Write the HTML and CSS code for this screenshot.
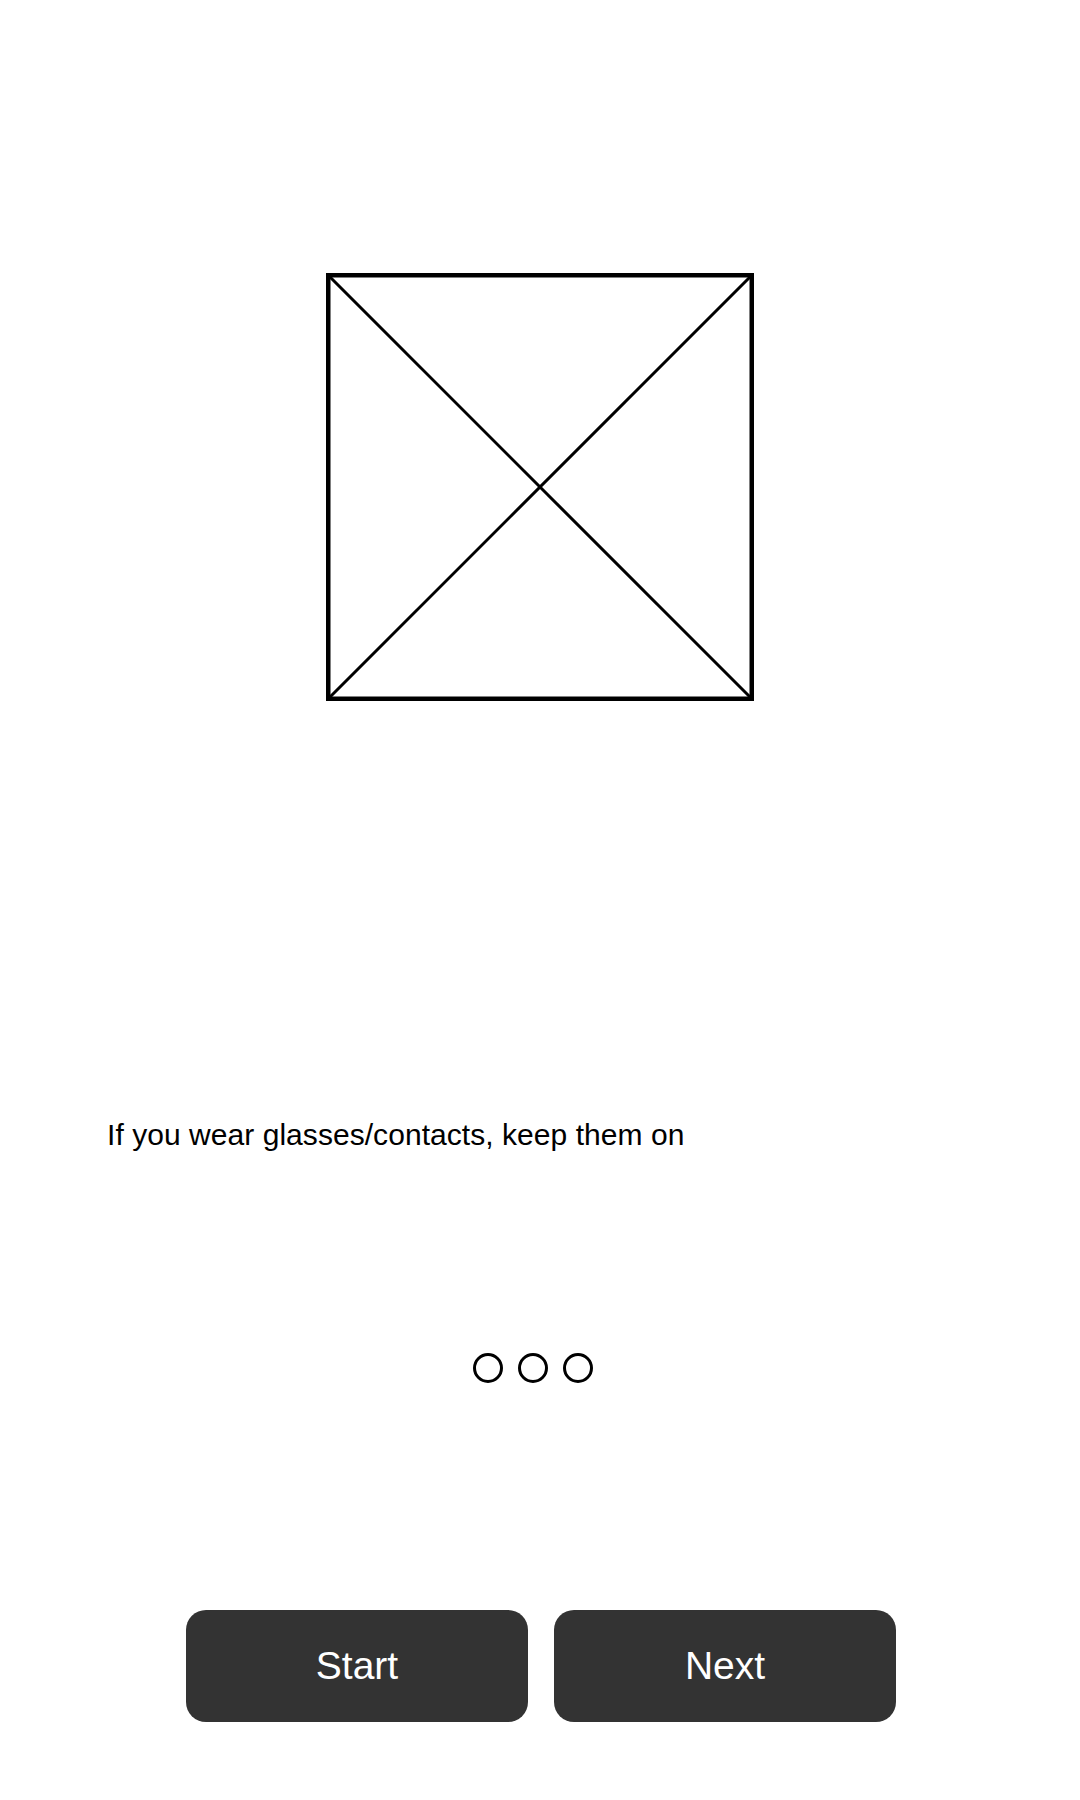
FILE: index.html
```html
<!DOCTYPE html>
<html lang="en">
<head>
<meta charset="utf-8">
<title>Instructions</title>
<link rel="stylesheet" href="styles.css">
</head>
<body>
<main class="screen">
  <div class="figure">
    <svg class="placeholder" viewBox="0 0 428 428" width="428" height="428">
      <rect x="2.25" y="2.25" width="423.5" height="423.5" fill="none" stroke="#000" stroke-width="4.5"/>
      <line x1="2" y1="2" x2="426" y2="426" stroke="#000" stroke-width="3"/>
      <line x1="426" y1="2" x2="2" y2="426" stroke="#000" stroke-width="3"/>
    </svg>
  </div>
  <p class="hint">If you wear glasses/contacts, keep them on</p>
  <div class="dots">
    <span class="dot"></span>
    <span class="dot"></span>
    <span class="dot"></span>
  </div>
  <div class="actions">
    <button class="btn">Start</button>
    <button class="btn">Next</button>
  </div>
</main>
</body>
</html>
```
FILE: styles.css
```css
html, body {
  margin: 0;
  padding: 0;
  background: #ffffff;
}

body {
  font-family: "Liberation Sans", Arial, sans-serif;
  color: #000;
}

.screen {
  display: flex;
  flex-direction: column;
  width: 1080px;
  min-height: 1800px;
}

.figure {
  margin: 273px auto 0;
  width: 428px;
  height: 428px;
}

.placeholder {
  display: block;
}

.hint {
  margin: 417px 0 0;
  padding-left: 107px;
  font-size: 30px;
  letter-spacing: 0.05px;
  line-height: 34px;
}

.dots {
  margin-top: 201px;
  display: flex;
  justify-content: center;
  gap: 15px;
  padding-right: 14px;
}

.dot {
  width: 30px;
  height: 30px;
  box-sizing: border-box;
  border: 3px solid #000;
  border-radius: 50%;
}

.actions {
  margin-top: 227px;
  display: flex;
  justify-content: center;
  gap: 26px;
  padding-left: 2px;
}

.btn {
  width: 342px;
  height: 112px;
  border: none;
  border-radius: 20px;
  background: #333333;
  color: #ffffff;
  font-family: "Liberation Sans", Arial, sans-serif;
  font-size: 39px;
  padding: 0;
}
```
